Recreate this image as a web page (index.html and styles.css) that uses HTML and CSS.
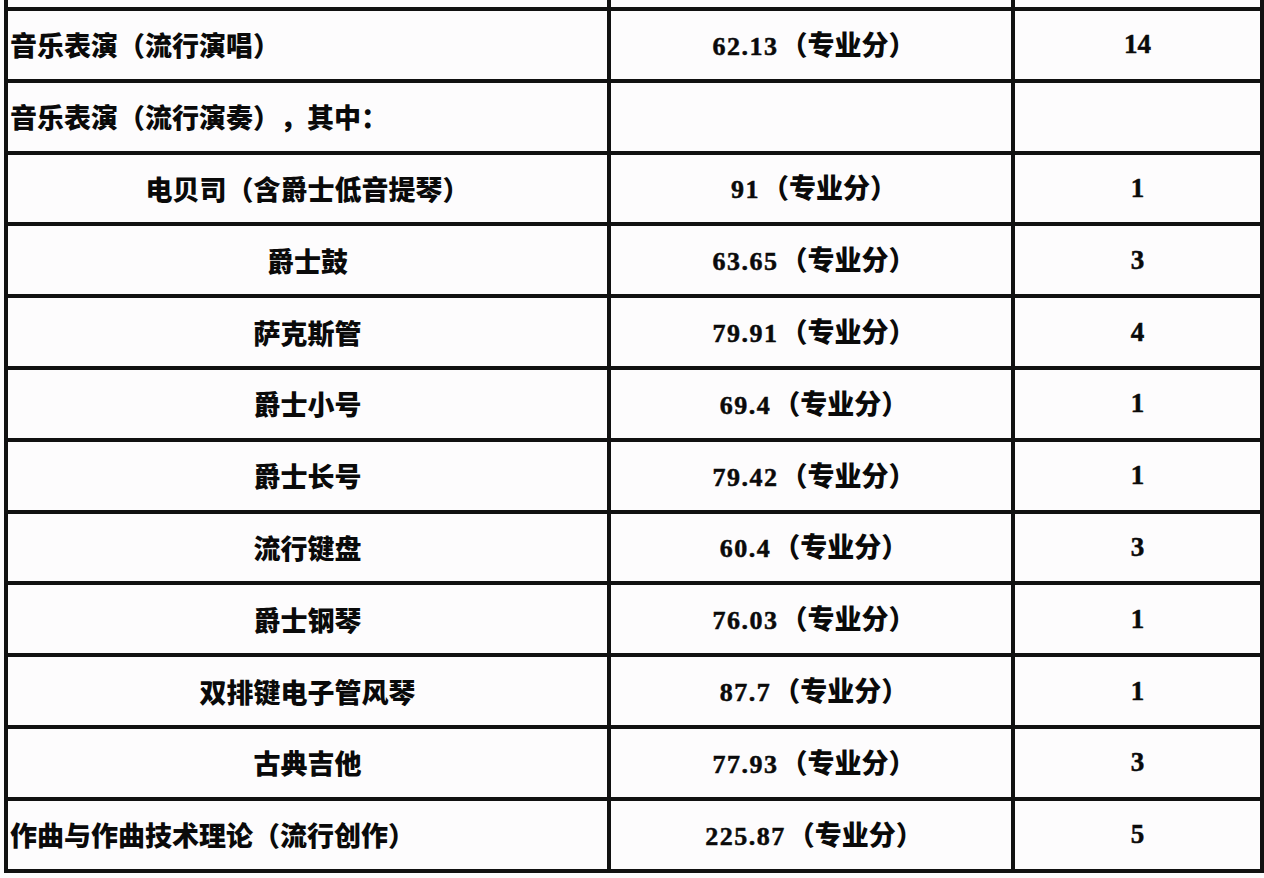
FILE: index.html
```html
<!DOCTYPE html>
<html lang="zh">
<head>
<meta charset="utf-8">
<link rel="stylesheet" href="styles.css">
<title>录取分数</title>
</head>
<body>
<table class="grid">
  <colgroup>
    <col class="c1"><col class="c2"><col class="c3">
  </colgroup>
  <tr class="stub"><td></td><td></td><td></td></tr>
  <tr><td class="name">音乐表演（流行演唱）</td><td class="score"><span class="num">62.13</span>（专业分）</td><td class="cnt">14</td></tr>
  <tr><td class="name">音乐表演（流行演奏），其中：</td><td></td><td></td></tr>
  <tr><td class="sub">电贝司（含爵士低音提琴）</td><td class="score"><span class="num">91</span>（专业分）</td><td class="cnt">1</td></tr>
  <tr><td class="sub">爵士鼓</td><td class="score"><span class="num">63.65</span>（专业分）</td><td class="cnt">3</td></tr>
  <tr><td class="sub">萨克斯管</td><td class="score"><span class="num">79.91</span>（专业分）</td><td class="cnt">4</td></tr>
  <tr><td class="sub">爵士小号</td><td class="score"><span class="num">69.4</span>（专业分）</td><td class="cnt">1</td></tr>
  <tr><td class="sub">爵士长号</td><td class="score"><span class="num">79.42</span>（专业分）</td><td class="cnt">1</td></tr>
  <tr><td class="sub">流行键盘</td><td class="score"><span class="num">60.4</span>（专业分）</td><td class="cnt">3</td></tr>
  <tr><td class="sub">爵士钢琴</td><td class="score"><span class="num">76.03</span>（专业分）</td><td class="cnt">1</td></tr>
  <tr><td class="sub">双排键电子管风琴</td><td class="score"><span class="num">87.7</span>（专业分）</td><td class="cnt">1</td></tr>
  <tr><td class="sub">古典吉他</td><td class="score"><span class="num">77.93</span>（专业分）</td><td class="cnt">3</td></tr>
  <tr><td class="name">作曲与作曲技术理论（流行创作）</td><td class="score"><span class="num">225.87</span>（专业分）</td><td class="cnt">5</td></tr>
</table>
</body>
</html>
```

FILE: styles.css
```css
html, body {
  margin: 0;
  padding: 0;
  background: #fdfcfd;
}
body {
  padding-left: 4px;
  font-family: "Noto Sans CJK SC", "Noto Sans", sans-serif;
  font-weight: 900;
  color: #0a0a0a;
  text-spacing-trim: space-all;
}
.grid {
  border-collapse: collapse;
  table-layout: fixed;
  width: 1256px;
}
.c1 { width: 603px; }
.c2 { width: 404px; }
.c3 { width: 249px; }
.grid td {
  border: 4px solid #111;
  height: 67.8px;
  padding: 0;
  font-size: 27px;
  line-height: 1;
  vertical-align: middle;
  white-space: nowrap;
  text-spacing-trim: space-all;
}
.grid tr.stub td {
  border-top: none;
  height: 7px;
}
.grid td.name {
  text-align: left;
  padding-left: 2px;
}
.grid td.sub {
  text-align: center;
}
.grid td.score {
  text-align: center;
  padding-left: 6px;
}
.num {
  font-family: "Liberation Serif", "DejaVu Serif", serif;
  font-weight: 700;
  font-size: 26px;
  letter-spacing: 1.5px;
  margin-right: 2px;
  -webkit-text-stroke: 0.5px #0a0a0a;
}
.grid td.cnt {
  text-align: center;
  font-family: "Liberation Serif", "DejaVu Serif", serif;
  font-weight: 700;
  font-size: 27px;
  -webkit-text-stroke: 0.5px #0a0a0a;
}
```
